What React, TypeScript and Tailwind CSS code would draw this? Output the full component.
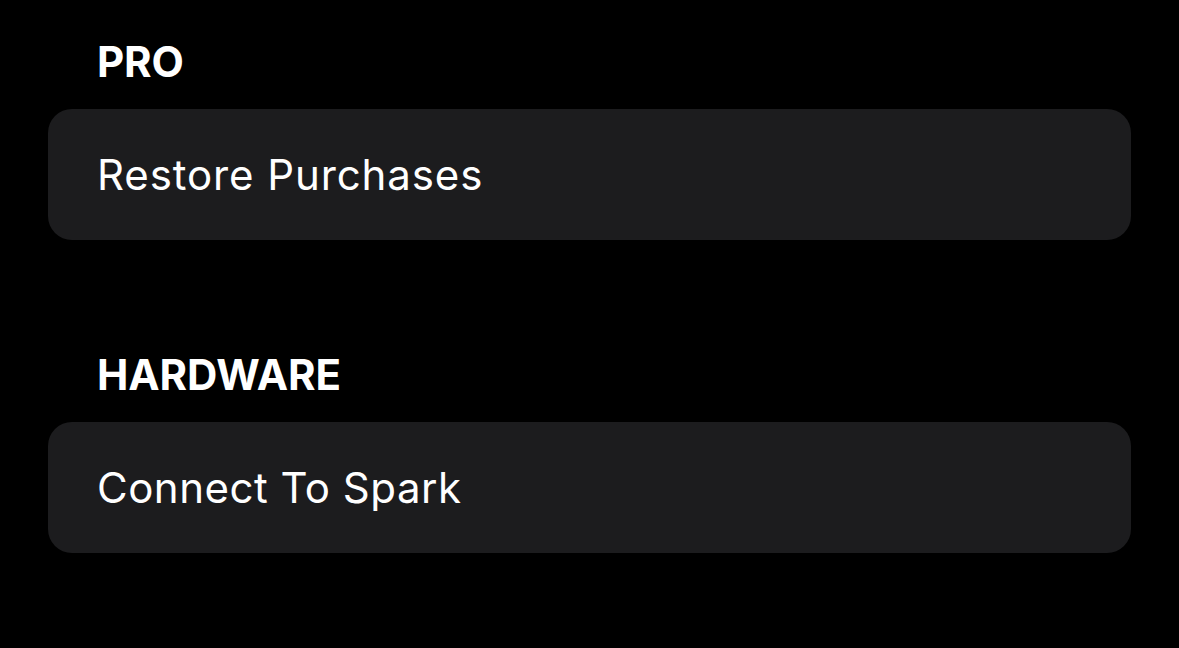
const sections = [
  { title: "PRO", item: "Restore Purchases", font: "poppins" },
  { title: "HARDWARE", item: "Connect To Spark", font: "system" },
];

export default function App() {
  return (
    <div className="min-h-[648px] w-full bg-black px-[48px] pt-[37px] font-['Inter',sans-serif] text-white">
      {sections.map((s, i) => (
        <section key={s.title} className={i > 0 ? "mt-[110px]" : ""}>
          <h2 className="mb-[22px] pl-[49px] text-[42px] font-bold leading-[50px] tracking-[-0.1px]">
            {s.title}
          </h2>
          <div className="flex h-[131px] items-center rounded-[24px] bg-[#1c1c1e] pl-[49px]">
            <span
              className={
                s.font === "poppins"
                  ? "text-[42px] leading-[50px] tracking-[0.9px]"
                  : "text-[42px] leading-[50px] tracking-[0.5px]"
              }
            >
              {s.item}
            </span>
          </div>
        </section>
      ))}
    </div>
  );
}
